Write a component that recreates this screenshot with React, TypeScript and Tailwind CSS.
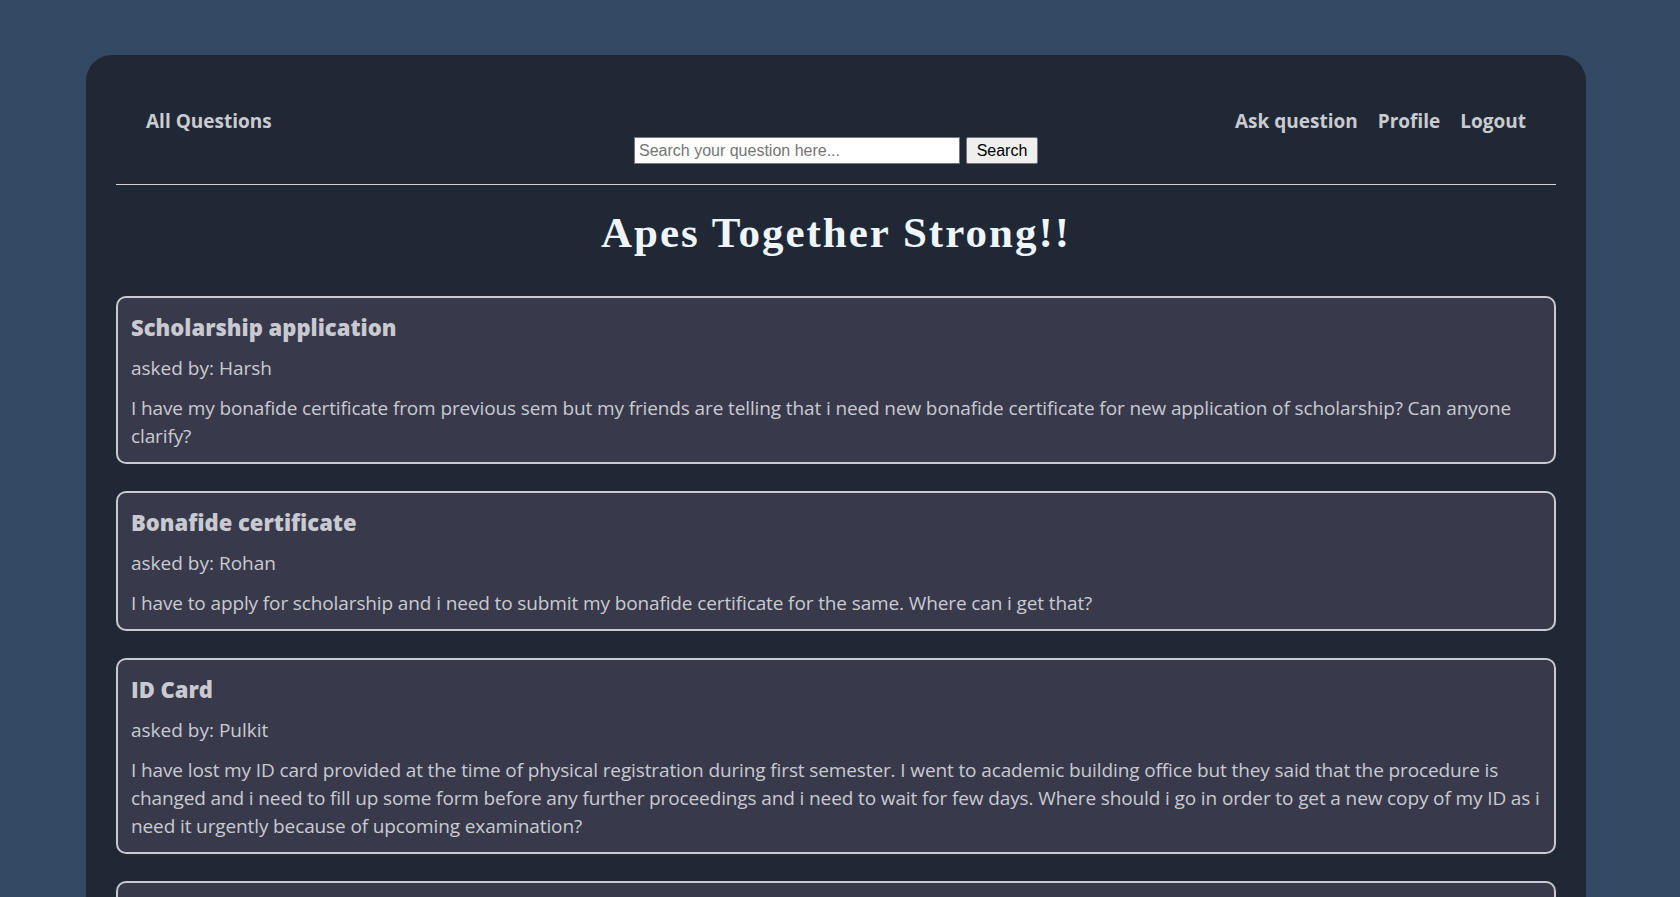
const questions = [
  {
    title: "Scholarship application",
    askedBy: "Harsh",
    body: "I have my bonafide certificate from previous sem but my friends are telling that i need new bonafide certificate for new application of scholarship? Can anyone clarify?",
  },
  {
    title: "Bonafide certificate",
    askedBy: "Rohan",
    body: "I have to apply for scholarship and i need to submit my bonafide certificate for the same. Where can i get that?",
  },
  {
    title: "ID Card",
    askedBy: "Pulkit",
    body: "I have lost my ID card provided at the time of physical registration during first semester. I went to academic building office but they said that the procedure is changed and i need to fill up some form before any further proceedings and i need to wait for few days. Where should i go in order to get a new copy of my ID as i need it urgently because of upcoming examination?",
  },
  {
    title: "Hostel allotment",
    askedBy: "Aman",
    body: "When will the hostel allotment list for the next semester be published?",
  },
];

const QuestionCard = ({ q }: { q: any }) => {
  return (
    <div className="border-2 border-[#c9c9cf] rounded-[10px] bg-[#383a4c] px-[13px] pt-[14px] pb-[12px] text-[#c9cad1]">
      <h2 className="text-[22px] leading-[30px] font-extrabold">{q.title}</h2>
      <p className="mt-3 text-[19px] leading-[28px]">asked by: {q.askedBy}</p>
      <p className="mt-3 text-[19px] leading-[28px] tracking-[-0.12px]">{q.body}</p>
    </div>
  );
};

const App = () => {
  return (
    <div
      className="min-h-screen bg-[#334862] pt-[55px] pb-10"
      style={{ fontFamily: '"Open Sans", "Noto Sans", sans-serif' }}
    >
      <div className="ml-[86px] w-[1500px] bg-[#212835] rounded-[26px] px-[30px] pt-[52px] pb-10">
        {/* navbar */}
        <div className="flex items-center justify-between px-[30px] text-[19px] leading-[28px] font-bold text-[#c9cbd0]">
          <a href="#">All Questions</a>
          <div className="flex gap-[20px]">
            <a href="#">Ask question</a>
            <a href="#">Profile</a>
            <a href="#">Logout</a>
          </div>
        </div>
        <div
          className="mt-[2px] flex justify-center gap-[6px]"
          style={{ fontFamily: '"Liberation Sans", Arial, sans-serif' }}
        >
          <input
            type="text"
            placeholder="Search your question here..."
            className="w-[326px] h-[27px] bg-white border border-[#767676] px-[4px] text-[16px] text-black placeholder:text-[#757575] outline-none"
          />
          <button className="w-[72px] h-[27px] bg-[#efefef] border border-[#767676] rounded-[2px] text-[16px] text-black">
            Search
          </button>
        </div>
        <hr className="mt-[20px] border-0 border-t border-[#d2d2d6]" />

        <h1
          className="mt-[24px] text-center text-[43px] leading-[48px] font-bold tracking-[2px] text-[#eef5ff]"
          style={{ fontFamily: '"Liberation Serif", "Times New Roman", serif' }}
        >
          Apes Together Strong!!
        </h1>

        <div className="mt-[39px] flex flex-col gap-[27px]">
          {questions.map((q) => (
            <QuestionCard key={q.title} q={q} />
          ))}
        </div>
      </div>
    </div>
  );
};

export default App;
